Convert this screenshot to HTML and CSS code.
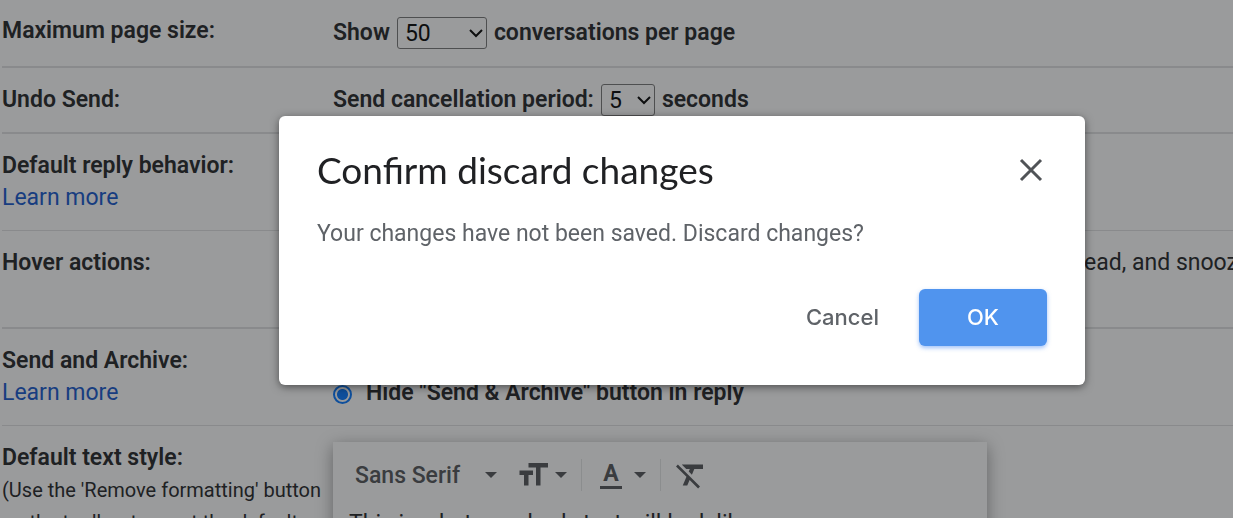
FILE: index.html
```
<!DOCTYPE html>
<html lang="en">
<head>
    <meta charset="UTF-8">
    <meta name="viewport" content="width=device-width, initial-scale=1.0">
    <title>Settings</title>
    <link rel="stylesheet" href="styles.css">
</head>
<body>

    <form class="settings">
        <div class="row first">
            <div class="label">Maximum page size:</div>
            <div class="value">
                <label for="pageSize">Show</label>
                <select id="pageSize" class="page-size">
                    <option>25</option>
                    <option selected>50</option>
                    <option>100</option>
                </select>
                <span>conversations per page</span>
            </div>
        </div>

        <div class="row thick">
            <div class="label">Undo Send:</div>
            <div class="value">
                <label for="undoPeriod">Send cancellation period:</label>
                <select id="undoPeriod" class="undo-period">
                    <option selected>5</option>
                    <option>10</option>
                    <option>20</option>
                    <option>30</option>
                </select>
                <span>seconds</span>
            </div>
        </div>

        <div class="row">
            <div class="label">Default reply behavior:<br><a href="#">Learn more</a></div>
        </div>

        <div class="row thick">
            <div class="label">Hover actions:</div>
            <div class="options">
                <label class="option"><input type="radio" name="hover" checked><span><b>Enable hover actions</b> - Quickly gain access to archive, delete, mark as read, and snooze controls on hover.</span></label>
                <label class="option"><input type="radio" name="hover"><b>Disable hover actions</b></label>
            </div>
        </div>

        <div class="row">
            <div class="label">Send and Archive:<br><a href="#">Learn more</a></div>
            <div class="options">
                <label class="option"><input type="radio" name="archive"><b>Show "Send &amp; Archive" button in reply</b></label>
                <label class="option"><input type="radio" name="archive" checked><b>Hide "Send &amp; Archive" button in reply</b></label>
            </div>
        </div>

        <div class="row">
            <div class="label">Default text style:
                <p class="note">(Use the 'Remove formatting' button on the toolbar to reset the default text style)</p>
            </div>
            <div class="editor">
                <div class="toolbar">
                    <button type="button" class="font-btn">Sans Serif <i class="arrow"></i></button>
                    <button type="button" aria-label="Size">
                        <svg width="36" height="36" viewBox="0 0 24 24"><path d="M9 4v3h5v12h3V7h5V4H9zm-6 8h3v7h3v-7h3V9H3v3z"/></svg>
                        <i class="arrow"></i>
                    </button>
                    <span class="sep"></span>
                    <button type="button" class="color-btn" aria-label="Text color">
                        <span class="color-a">A</span>
                        <i class="arrow"></i>
                    </button>
                    <span class="sep"></span>
                    <button type="button" aria-label="Remove formatting">
                        <svg width="36" height="36" viewBox="0 0 24 24"><path d="M3.27 5L2 6.27l6.97 6.97L6.5 19h3l1.57-3.66L16.73 21 18 19.73 3.55 5.27 3.27 5zM6 5v.18L8.82 8h2.4l-.72 1.68 2.1 2.1L14.21 8H20V5H6z"/></svg>
                    </button>
                </div>
                <div class="sample">This is what your body text will look like.</div>
            </div>
        </div>
    </form>

    <div class="overlay">
        <div class="dialog" role="dialog" aria-labelledby="dialogTitle">
            <div class="dialog-head">
                <h1 id="dialogTitle">Confirm discard changes</h1>
                <button type="button" class="close" aria-label="Close">
                    <svg width="24" height="24" viewBox="0 0 24 24"><path d="M2 2l20 20M22 2L2 22"/></svg>
                </button>
            </div>
            <p>Your changes have not been saved. Discard changes?</p>
            <div class="dialog-buttons">
                <button type="button" class="cancel">Cancel</button>
                <button type="button" class="ok">OK</button>
            </div>
        </div>
    </div>

</body>
</html>
```

FILE: styles.css
```
* {
    box-sizing: border-box;
}

body {
    margin: 0;
    height: 100vh;
    overflow: hidden;
    background: white;
    color: #202124;
    font-family: Roboto, Arial, sans-serif;
    font-size: 23px;
    line-height: 32px;
}

button {
    border: none;
    background: none;
    padding: 0;
    font-family: inherit;
    cursor: pointer;
}

a {
    color: #1155cc;
    font-weight: 400;
    text-decoration: none;
}

b {
    font-weight: 600;
}

/* settings page */
.settings {
    padding-left: 2px;
}

.row {
    display: grid;
    grid-template-columns: 331px 1fr;
    padding: 16px 0;
    border-bottom: 1px solid #e0e1e2;
}

.first,
.thick {
    border-bottom-width: 2px;
}

.first {
    padding: 15px 0 17px;
}

.first .value {
    padding-top: 2px;
}

.label {
    font-weight: 600;
}

.value {
    display: flex;
    align-items: center;
    gap: 7px;
    font-weight: 600;
}

select {
    appearance: none;
    height: 32px;
    padding: 0 7px;
    border: 1px solid #767676;
    border-radius: 3px;
    background: white url("data:image/svg+xml,%3Csvg xmlns='http://www.w3.org/2000/svg' width='14' height='10'%3E%3Cpath d='M1 2l6 6 6-6' fill='none' stroke='black' stroke-width='2'/%3E%3C/svg%3E") no-repeat right 3px center;
    color: black;
    font-family: inherit;
    font-size: 23px;
}

.page-size {
    width: 90px;
}

.undo-period {
    width: 54px;
}

.options {
    min-width: 0;
}

.option {
    display: flex;
    align-items: center;
    gap: 14px;
    white-space: nowrap;
}

/* ring with a dot inside */
.option input {
    appearance: none;
    flex: none;
    width: 19px;
    height: 19px;
    margin: 2px 0 0;
    border: 2px solid #767676;
    border-radius: 50%;
}

.option input:checked {
    border-color: #0075ff;
    background: radial-gradient(circle, #0075ff 5px, transparent 6px);
}

.note {
    margin: 0;
    font-size: 20px;
    font-weight: 400;
}

.editor {
    width: 654px;
    height: 220px;
    background: white;
    box-shadow: 0 4px 16px rgba(0, 0, 0, 0.4);
}

.toolbar {
    display: flex;
    align-items: center;
    height: 66px;
    padding-left: 22px;
    fill: #505357;
}

.toolbar button {
    display: flex;
    align-items: center;
    color: #505357;
    font-size: 23px;
    font-weight: 500;
}

.arrow {
    border: 6px solid transparent;
    border-top-color: #505357;
    border-bottom: none;
}

.toolbar .font-btn {
    justify-content: space-between;
    width: 142px;
    margin-right: 18px;
}

.toolbar svg {
    margin-right: 4px;
}

.sep {
    width: 1px;
    height: 32px;
    margin-left: 14px;
    background: #e4e5e6;
}

.toolbar .color-btn {
    gap: 12px;
    margin-left: 18px;
}

.color-a {
    width: 22px;
    border-bottom: 3px solid #505357;
    font-weight: 700;
    line-height: 24px;
}

.sep + button:last-child {
    margin-left: 12px;
}

.sample {
    padding: 0 16px;
}

/* confirm dialog */
.overlay {
    position: fixed;
    inset: 0;
    display: flex;
    align-items: flex-start;
    padding: 116px 148px 0 279px;
    background: rgba(32, 33, 36, 0.45);
}

.dialog {
    flex: 1;
    padding: 30px 38px 39px;
    border-radius: 6px;
    background: white;
    box-shadow: 0 2px 8px rgba(0, 0, 0, 0.5);
}

.dialog-head {
    display: flex;
    align-items: center;
    justify-content: space-between;
}

.dialog h1 {
    margin: 0;
    font-family: Lato, sans-serif;
    font-size: 37px;
    font-weight: 400;
    line-height: 48px;
}

.close {
    display: flex;
    margin-right: 4px;
}

.close svg {
    fill: none;
    stroke: #505357;
    stroke-width: 3;
}

.dialog p {
    margin: 24px 0 39px;
    color: #5f6368;
}

.dialog-buttons {
    display: flex;
    justify-content: flex-end;
    gap: 40px;
}

.dialog-buttons button {
    padding-bottom: 2px;
    font-family: Inter, sans-serif;
    font-size: 22px;
    font-weight: 500;
}

.cancel {
    color: #5f6368;
}

.dialog-buttons .ok {
    width: 128px;
    height: 57px;
    border-radius: 6px;
    background: #5094ee;
    color: white;
    box-shadow: 0 2px 4px rgba(66, 133, 244, 0.5);
}
```
